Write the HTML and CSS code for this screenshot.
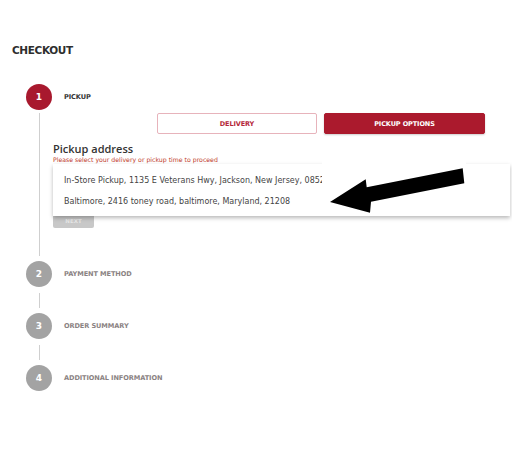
FILE: index.html
```html
<!DOCTYPE html>
<html lang="en">
<head>
<meta charset="utf-8">
<title>Checkout</title>
<link rel="stylesheet" href="styles.css">
</head>
<body>
<div class="page">
  <h1 class="title">CHECKOUT</h1>
  <ol class="steps">
    <li class="step active">
      <div class="step-head"><span class="circle">1</span><span class="label">PICKUP</span></div>
      <div class="step-body">
        <div class="toggle">
          <button class="btn btn-outline">DELIVERY</button>
          <button class="btn btn-solid">PICKUP OPTIONS</button>
        </div>
        <div class="pickup">
          <h2 class="pickup-title">Pickup address</h2>
          <p class="hint">Please select your delivery or pickup time to proceed</p>
          <ul class="dropdown">
            <li class="option">In-Store Pickup, 1135 E Veterans Hwy, Jackson, New Jersey, 08527</li>
            <li class="option">Baltimore, 2416 toney road, baltimore, Maryland, 21208</li>
          </ul>
          <button class="btn-next">NEXT</button>
        </div>
      </div>
    </li>
    <li class="step">
      <div class="step-head"><span class="circle">2</span><span class="label">PAYMENT METHOD</span></div>
      <div class="connector"></div>
    </li>
    <li class="step">
      <div class="step-head"><span class="circle">3</span><span class="label">ORDER SUMMARY</span></div>
      <div class="connector"></div>
    </li>
    <li class="step">
      <div class="step-head"><span class="circle">4</span><span class="label">ADDITIONAL INFORMATION</span></div>
    </li>
  </ol>
  <div class="arrow-note">
    <svg width="144" height="56" viewBox="0 0 144 56">
      <polygon points="8,42 43.7,19.3 44.7,27.3 140.7,8.3 142.3,23.3 49,41.7 48,52.7" fill="#000"/>
    </svg>
  </div>
</div>
</body>
</html>
```
FILE: styles.css
```css
* { box-sizing: border-box; }
html, body { margin: 0; padding: 0; background: #fff; }
body { font-family: "DejaVu Sans", "Open Sans", sans-serif; color: #333; }
.page { position: relative; width: 512px; height: 454px; padding: 43px 27px 0 0; }
.title { margin: 0 0 27px 12px; font-size: 10.5px; line-height: 14px; font-weight: 700; color: #2e2e2e; letter-spacing: -0.35px; }
.steps { list-style: none; margin: 0; padding: 0 0 0 26px; }
.step-head { display: flex; align-items: center; gap: 12px; height: 26px; }
.circle { width: 26px; height: 26px; border-radius: 50%; background: #a3a3a3; color: #fff; font-weight: 700; font-size: 9px; display: flex; align-items: center; justify-content: center; flex: none; }
.active .circle { background: #a8192e; }
.label { font-size: 6.6px; font-weight: 700; color: #8a8282; letter-spacing: -0.1px; }
.active .label { color: #333; }
.step-body { margin: 3px 0 5px 13px; border-left: 1px solid #cfcfcf; padding: 0 0 28px 13px; }
.connector { margin: 6px 0 5px 13px; height: 15px; border-left: 1px solid #cfcfcf; }
.toggle { display: flex; justify-content: flex-end; gap: 7px; }
.btn { width: 160px; height: 21px; border-radius: 2px; font-family: inherit; font-size: 6.5px; font-weight: 700; padding: 0; letter-spacing: -0.1px; }
.btn-outline { background: #fff; border: 1px solid #e7b3bb; color: #b4283b; }
.btn-solid { width: 161px; background: #ab1a2d; border: 1px solid #ab1a2d; color: #fff; box-shadow: 0 1px 2px rgba(0,0,0,0.2); }
.pickup { position: relative; padding-top: 8px; }
.pickup-title { margin: 0; font-family: "Open Sans", sans-serif; font-size: 11px; line-height: 14px; font-weight: 600; color: #333; }
.hint { margin: 0; font-size: 6.2px; line-height: 8px; color: #c0392b; }
.dropdown { position: absolute; top: 30px; left: 0; width: 457px; height: 52px; margin: 0; padding: 6px 0 0 11px; list-style: none; background: #fff; box-shadow: 0 2px 4px rgba(0,0,0,0.28); z-index: 2; }
.option { font-size: 8px; line-height: 21px; color: #444; white-space: nowrap; }
.btn-next { display: block; margin-top: 46px; width: 41px; height: 18px; border: none; border-radius: 2px; background: #c8c8c8; color: #e6e6e6; font-family: inherit; font-size: 5.5px; font-weight: 700; padding: 4px 0 0; }
.arrow-note { position: absolute; left: 322px; top: 160px; width: 144px; height: 56px; background: #fff; z-index: 3; }
.arrow-note svg { display: block; }
```
